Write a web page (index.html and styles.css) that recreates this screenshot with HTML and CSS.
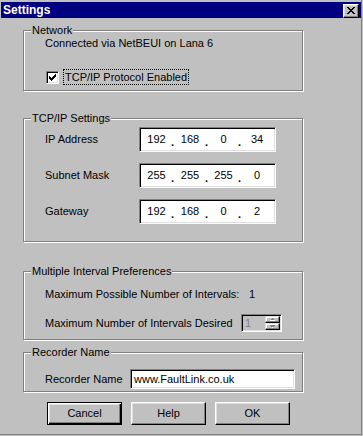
FILE: index.html
```html
<!DOCTYPE html>
<html>
<head>
<meta charset="utf-8">
<link rel="stylesheet" href="styles.css">
</head>
<body>
<div class="window">
  <div class="titlebar">
    <span class="title">Settings</span>
    <span class="close"><svg width="8" height="7" viewBox="0 0 8 7" shape-rendering="crispEdges"><path d="M0 0h2v1h-2zM6 0h2v1h-2zM1 1h2v1h-2zM5 1h2v1h-2zM2 2h4v1h-4zM3 3h2v1h-2zM2 4h4v1h-4zM1 5h2v1h-2zM5 5h2v1h-2zM0 6h2v1h-2zM6 6h2v1h-2z" fill="#000"/></svg></span>
  </div>
  <div class="content">
    <div class="group g-network">
      <span class="legend">Network</span>
      <div class="line">Connected via NetBEUI on Lana 6</div>
      <div class="checkrow">
        <span class="checkbox"><svg width="7" height="7" viewBox="0 0 7 7" shape-rendering="crispEdges"><path d="M6 0h1v1h-1zM5 1h2v1h-2zM0 2h1v1h-1zM4 2h3v1h-3zM0 3h2v1h-2zM3 3h3v1h-3zM0 4h5v1h-5zM1 5h3v1h-3zM2 6h1v1h-1z" fill="#000"/></svg></span>
        <span class="focuslabel">TCP/IP Protocol Enabled</span>
      </div>
    </div>

    <div class="group g-tcp">
      <span class="legend">TCP/IP Settings</span>
      <div class="iprow">
        <span class="lbl">IP Address</span>
        <div class="ipbox"><span class="seg s1">192</span><span class="dot">.</span><span class="seg s2">168</span><span class="dot">.</span><span class="seg s1">0</span><span class="dot">.</span><span class="seg s2">34</span></div>
      </div>
      <div class="iprow">
        <span class="lbl">Subnet Mask</span>
        <div class="ipbox"><span class="seg s1">255</span><span class="dot">.</span><span class="seg s2">255</span><span class="dot">.</span><span class="seg s1">255</span><span class="dot">.</span><span class="seg s2">0</span></div>
      </div>
      <div class="iprow">
        <span class="lbl">Gateway</span>
        <div class="ipbox"><span class="seg s1">192</span><span class="dot">.</span><span class="seg s2">168</span><span class="dot">.</span><span class="seg s1">0</span><span class="dot">.</span><span class="seg s2">2</span></div>
      </div>
    </div>

    <div class="group g-multi">
      <span class="legend">Multiple Interval Preferences</span>
      <div class="mrow">
        <span class="mlbl">Maximum Possible Number of Intervals:</span>
        <span class="mval">1</span>
      </div>
      <div class="mrow r2">
        <span class="mlbl">Maximum Number of Intervals Desired</span>
        <div class="spin">
          <span class="spinval">1</span>
          <div class="spinbtns">
            <span class="sbtn"><svg width="5" height="3" viewBox="0 0 5 3" shape-rendering="crispEdges"><path d="M2 0h1v1h-1zM1 1h3v1h-3z" fill="#808080"/><path d="M0 2h5v1h-5z" fill="#fff"/></svg></span>
            <span class="sbtn"><svg width="5" height="3" viewBox="0 0 5 3" shape-rendering="crispEdges"><path d="M0 0h5v1h-5zM1 1h3v1h-3z" fill="#808080"/><path d="M2 2h1v1h-1z" fill="#fff"/></svg></span>
          </div>
        </div>
      </div>
    </div>

    <div class="group g-rec">
      <span class="legend">Recorder Name</span>
      <div class="recrow">
        <span class="rlbl">Recorder Name</span>
        <div class="textbox">www.FaultLink.co.uk</div>
      </div>
    </div>

    <div class="buttons">
      <span class="btn default">Cancel</span>
      <span class="btn">Help</span>
      <span class="btn">OK</span>
    </div>
  </div>
</div>
</body>
</html>
```

FILE: styles.css
```css
html, body {
  margin: 0;
  padding: 0;
  background: #c0c0c0;
}
body {
  font-family: "Liberation Sans", Arial, sans-serif;
  font-size: 11px;
  line-height: 13px;
  color: #000;
}
.window {
  width: 362px;
  height: 435px;
  box-sizing: border-box;
  border-right: 1px solid #808080;
  border-bottom: 1px solid #808080;
  padding: 2px 0 0 1px;
  background: #c0c0c0;
}
.titlebar {
  height: 16px;
  width: 360px;
  background: #000080;
  display: flex;
  align-items: center;
  justify-content: space-between;
  box-sizing: border-box;
  padding: 0 2px 0 2px;
}
.title {
  color: #fff;
  font-weight: bold;
  font-size: 12px;
  line-height: 16px;
}
.close {
  width: 16px;
  height: 14px;
  box-sizing: border-box;
  background: #c0c0c0;
  border: 1px solid;
  border-color: #fff #000 #000 #fff;
  box-shadow: inset -1px -1px #808080, inset 1px 1px #dfdfdf;
  display: flex;
  align-items: center;
  justify-content: center;
  margin-top: 1px;
}
.close svg { display: block; margin: 0 0 0 0; }
.content {
  padding-left: 22px;
  display: flex;
  flex-direction: column;
}
.group {
  position: relative;
  width: 280px;
  box-sizing: border-box;
  border: 1px solid #808080;
  box-shadow: 1px 1px 0 #fff, inset 1px 1px 0 #fff;
  padding-left: 21px;
}
.legend {
  position: absolute;
  left: 7px;
  top: -7px;
  padding: 0 1px;
  background: #c0c0c0;
  white-space: nowrap;
}
.g-network {
  margin-top: 12px;
  height: 61px;
  padding-top: 6px;
}
.checkrow {
  margin-top: 19px;
  display: flex;
  align-items: center;
  height: 16px;
}
.checkbox {
  width: 13px;
  height: 13px;
  box-sizing: border-box;
  margin-left: 1px;
  background: #fff;
  border: 1px solid;
  border-color: #808080 #fff #fff #808080;
  box-shadow: inset 1px 1px #000, inset -1px -1px #dfdfdf;
  display: flex;
  align-items: center;
  justify-content: center;
}
.checkbox svg { display: block; }
.focuslabel {
  margin-left: 4px;
  padding: 1px 1px;
  border: 1px dotted #000;
  line-height: 12px;
}
.g-tcp {
  margin-top: 27px;
  height: 124px;
  padding-top: 8px;
  display: flex;
  flex-direction: column;
  gap: 11px;
}
.iprow {
  display: flex;
  align-items: center;
}
.lbl {
  width: 94px;
}
.ipbox {
  width: 137px;
  height: 25px;
  box-sizing: border-box;
  background: #fff;
  border: 1px solid;
  border-color: #808080 #fff #fff #808080;
  box-shadow: inset 1px 1px #000, inset -1px -1px #dfdfdf;
  padding: 2px 2px 0 1px;
  display: flex;
  align-items: flex-start;
}
.seg {
  text-align: center;
  padding-top: 3px;
}
.s1 { width: 31px; }
.s2 { width: 32px; }
.dot {
  width: 2px;
  font-weight: bold;
  padding-top: 6px;
  overflow: visible;
  text-indent: -1px;
}
.g-multi {
  margin-top: 29px;
  height: 69px;
  padding-top: 16px;
}
.mrow {
  display: flex;
  align-items: center;
}
.mrow.r2 {
  margin-top: 13px;
}
.mlbl {
  width: 196px;
}
.mval {
  padding-left: 8px;
}
.spin {
  width: 41px;
  height: 18px;
  box-sizing: border-box;
  border: 1px solid;
  border-color: #808080 #fff #fff #808080;
  box-shadow: inset 1px 1px #000, inset -1px -1px #dfdfdf;
  display: flex;
  padding: 1px 1px 1px 2px;
}
.spinval {
  flex: 1;
  color: #808080;
  padding-left: 1px;
  line-height: 14px;
}
.spinbtns {
  width: 15px;
  display: flex;
  flex-direction: column;
}
.sbtn {
  flex: 1;
  box-sizing: border-box;
  border: 1px solid;
  border-color: #dfdfdf #000 #000 #dfdfdf;
  box-shadow: inset -1px -1px #808080, inset 1px 1px #fff;
  display: flex;
  align-items: center;
  justify-content: center;
}
.sbtn svg { display: block; }
.g-rec {
  margin-top: 12px;
  height: 40px;
  padding-top: 16px;
}
.recrow {
  display: flex;
  align-items: center;
}
.rlbl {
  width: 85px;
}
.textbox {
  width: 165px;
  height: 20px;
  box-sizing: border-box;
  background: #fff;
  border: 1px solid;
  border-color: #808080 #fff #fff #808080;
  box-shadow: inset 1px 1px #000, inset -1px -1px #dfdfdf;
  padding: 3px 2px 0 3px;
  white-space: nowrap;
}
.buttons {
  margin-top: 10px;
  margin-left: 24px;
  display: flex;
  gap: 9px;
}
.btn {
  width: 75px;
  height: 23px;
  box-sizing: border-box;
  border: 1px solid;
  border-color: #fff #000 #000 #fff;
  box-shadow: inset -1px -1px #808080, inset 1px 1px #dfdfdf;
  display: flex;
  align-items: center;
  justify-content: center;
}
.btn.default {
  border: 1px solid #000;
  box-shadow: inset 1px 1px #fff, inset -1px -1px #000, inset -2px -2px #808080, inset 2px 2px #dfdfdf;
}
```
